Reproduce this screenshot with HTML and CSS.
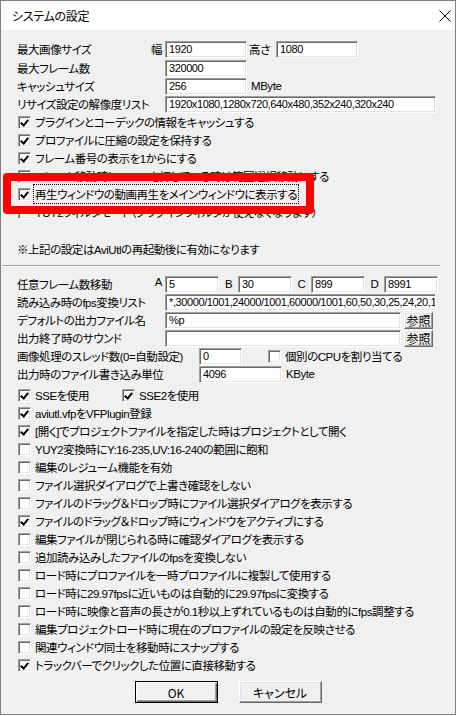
FILE: index.html
```html
<!DOCTYPE html>
<html lang="ja">
<head>
<meta charset="utf-8">
<title>システムの設定</title>
<link rel="stylesheet" href="styles.css">
</head>
<body>
<div class="window">
  <div class="titlebar">
    <span class="title">システムの設定</span>
    <svg class="close" width="12" height="12" viewBox="0 0 12 12"><path d="M0.5 0.5 L11.5 11.5 M11.5 0.5 L0.5 11.5" stroke="#000" stroke-width="1" fill="none"/></svg>
  </div>
  <div class="content">
    <div class="row first">
      <div class="lbl"><span>最大画像サイズ</span><span>幅</span></div>
      <div class="field w82">1920</div>
      <span class="mid takasa">高さ</span>
      <div class="field w82">1080</div>
    </div>
    <div class="row">
      <div class="lbl"><span>最大フレーム数</span></div>
      <div class="field w82">320000</div>
    </div>
    <div class="row">
      <div class="lbl"><span>キャッシュサイズ</span></div>
      <div class="field w82">256</div>
      <span class="unit">MByte</span>
    </div>
    <div class="row">
      <div class="lbl"><span>リサイズ設定の解像度リスト</span></div>
      <div class="field wfull">1920x1080,1280x720,640x480,352x240,320x240</div>
    </div>

    <div class="checks">
      <div class="row chk"><span class="box on"></span><span class="txt">プラグインとコーデックの情報をキャッシュする</span></div>
      <div class="row chk"><span class="box on"></span><span class="txt">プロファイルに圧縮の設定を保持する</span></div>
      <div class="row chk"><span class="box on"></span><span class="txt">フレーム番号の表示を1からにする</span></div>
      <div class="row chk"><span class="box on"></span><span class="txt">フレーム移動時にSHIFTを押している時は範囲選択移動にする</span></div>
      <div class="row chk"><span class="box on"></span><span class="txt focus">再生ウィンドウの動画再生をメインウィンドウに表示する</span></div>
      <div class="row chk"><span class="box"></span><span class="txt">YUY2フィルタモード（プラグインフィルタが使えなくなります）</span></div>
    </div>

    <div class="note">※上記の設定はAviUtlの再起動後に有効になります</div>
    <div class="sep"></div>

    <div class="row">
      <div class="lbl"><span>任意フレーム数移動</span><span>A</span></div>
      <div class="field w54">5</div>
      <span class="abc">B</span>
      <div class="field w54">30</div>
      <span class="abc">C</span>
      <div class="field w54">899</div>
      <span class="abc">D</span>
      <div class="field w54">8991</div>
    </div>
    <div class="row">
      <div class="lbl"><span>読み込み時のfps変換リスト</span></div>
      <div class="field wfull">*,30000/1001,24000/1001,60000/1001,60,50,30,25,24,20,15,12,10,8,6,5,4,3,2,1</div>
    </div>
    <div class="row">
      <div class="lbl"><span>デフォルトの出力ファイル名</span></div>
      <div class="field w236">%p</div>
      <div class="btn ref">参照</div>
    </div>
    <div class="row">
      <div class="lbl"><span>出力終了時のサウンド</span></div>
      <div class="field w236"></div>
      <div class="btn ref">参照</div>
    </div>
    <div class="row">
      <div class="lbl wide"><span>画像処理のスレッド数(0=自動設定)</span></div>
      <div class="field w43">0</div>
      <span class="box cpu"></span><span class="txt">個別のCPUを割り当てる</span>
    </div>
    <div class="row">
      <div class="lbl wide"><span>出力時のファイル書き込み単位</span></div>
      <div class="field w83">4096</div>
      <span class="unit">KByte</span>
    </div>

    <div class="row chk sse">
      <span class="box on"></span><span class="txt sse1">SSEを使用</span>
      <span class="box on"></span><span class="txt">SSE2を使用</span>
    </div>
    <div class="row chk"><span class="box on"></span><span class="txt">aviutl.vfpをVFPlugin登録</span></div>
    <div class="row chk"><span class="box on"></span><span class="txt">[開く]でプロジェクトファイルを指定した時はプロジェクトとして開く</span></div>
    <div class="row chk"><span class="box"></span><span class="txt">YUY2変換時にY:16-235,UV:16-240の範囲に飽和</span></div>
    <div class="row chk"><span class="box"></span><span class="txt">編集のレジューム機能を有効</span></div>
    <div class="row chk"><span class="box"></span><span class="txt">ファイル選択ダイアログで上書き確認をしない</span></div>
    <div class="row chk"><span class="box"></span><span class="txt">ファイルのドラッグ＆ドロップ時にファイル選択ダイアログを表示する</span></div>
    <div class="row chk"><span class="box on"></span><span class="txt">ファイルのドラッグ＆ドロップ時にウィンドウをアクティブにする</span></div>
    <div class="row chk"><span class="box"></span><span class="txt">編集ファイルが閉じられる時に確認ダイアログを表示する</span></div>
    <div class="row chk"><span class="box"></span><span class="txt">追加読み込みしたファイルのfpsを変換しない</span></div>
    <div class="row chk"><span class="box"></span><span class="txt">ロード時にプロファイルを一時プロファイルに複製して使用する</span></div>
    <div class="row chk"><span class="box"></span><span class="txt">ロード時に29.97fpsに近いものは自動的に29.97fpsに変換する</span></div>
    <div class="row chk"><span class="box"></span><span class="txt">ロード時に映像と音声の長さが0.1秒以上ずれているものは自動的にfps調整する</span></div>
    <div class="row chk"><span class="box"></span><span class="txt">編集プロジェクトロード時に現在のプロファイルの設定を反映させる</span></div>
    <div class="row chk"><span class="box"></span><span class="txt">関連ウィンドウ同士を移動時にスナップする</span></div>
    <div class="row chk"><span class="box on"></span><span class="txt">トラックバーでクリックした位置に直接移動する</span></div>

    <div class="buttons">
      <div class="btn big default">OK</div>
      <div class="btn big">キャンセル</div>
    </div>
  </div>
  <div class="highlight"></div>
</div>
</body>
</html>
```
FILE: styles.css
```css
* { box-sizing: border-box; }
html, body { margin: 0; padding: 0; background: #fff; }
body {
  font-family: "Liberation Sans", "Noto Sans CJK JP", sans-serif;
  font-size: 11.5px;
  letter-spacing: -0.45px;
  color: #000;
  font-feature-settings: "palt";
}
.window {
  position: relative;
  width: 456px;
  height: 715px;
  border: 1px solid #7f7f7f;
  background: #f0f0f0;
  overflow: hidden;
}
.titlebar {
  height: 29px;
  background: #fff;
  display: flex;
  align-items: center;
  justify-content: space-between;
  padding: 0 4px 0 11px;
}
.title {
  font-family: "Noto Sans CJK JP", sans-serif;
  font-size: 12px;
  letter-spacing: -0.3px;
  color: #000;
}
.close { display: block; margin-top: 1px; }

.content { padding: 10px 16px 0 16px; }

.row {
  display: flex;
  align-items: center;
  height: 18px;
  white-space: nowrap;
}
.row.first { margin-bottom: 1px; }
.lbl {
  width: 148px;
  flex: none;
  display: flex;
  justify-content: space-between;
  padding-right: 3px;
}
.lbl.wide { width: 182px; }

.field {
  flex: none;
  height: 17px;
  background: #fff;
  border: 1px solid;
  border-color: #a0a0a0 #fff #fff #a0a0a0;
  box-shadow: inset 1px 1px 0 #696969, inset -1px -1px 0 #e3e3e3;
  padding: 0 0 0 3px;
  font-family: "Liberation Sans", sans-serif;
  font-size: 11px;
  letter-spacing: -0.4px;
  line-height: 15px;
  overflow: hidden;
  white-space: nowrap;
}
.w82 { width: 82px; }
.w83 { width: 83px; }
.w54 { width: 54px; }
.w43 { width: 43px; }
.w236 { width: 236px; }
.wfull { width: 271px; }

.takasa { width: 29px; padding-left: 2px; flex: none; }
.unit { margin-left: 4px; }
.abc { width: 19px; flex: none; text-align: center; }

.btn {
  flex: none;
  display: flex;
  align-items: center;
  justify-content: center;
  background: #f0f0f0;
  border: 1px solid;
  border-color: #fff #696969 #696969 #fff;
  box-shadow: inset -1px -1px 0 #a0a0a0, inset 1px 1px 0 #e3e3e3;
  font-family: "Noto Sans CJK JP", sans-serif;
  letter-spacing: 0;
}
.btn.ref {
  width: 29px;
  height: 17px;
  margin-left: 3px;
  font-size: 12px;
}

.chk .txt, .row .txt { margin-left: 4px; }
.box {
  flex: none;
  position: relative;
  width: 13px;
  height: 13px;
  background: #fff;
  border: 1px solid;
  border-color: #a0a0a0 #fff #fff #a0a0a0;
  box-shadow: inset 1px 1px 0 #696969, inset -1px -1px 0 #e3e3e3;
  margin-left: 1px;
}
.box.on::after {
  content: "";
  position: absolute;
  left: 2px;
  top: 1px;
  width: 3px;
  height: 6px;
  border: solid #000;
  border-width: 0 2px 2px 0;
  transform: translate(1px, 0) rotate(40deg);
}
.box.cpu { margin-left: 26px; }
.txt.focus {
  outline: 1px dotted #000;
  outline-offset: 1px;
}
.sse1 { width: 86px; flex: none; }

.note { margin-top: 20px; height: 18px; line-height: 18px; }
.sep {
  margin: 6px 0 0 -15px;
  width: 438px;
  height: 2px;
  border-top: 1px solid #a0a0a0;
  border-bottom: 1px solid #fff;
}
.sep + .row { margin-top: 8px; }
.row.sse { margin-top: 3px; }

.buttons {
  display: flex;
  justify-content: center;
  gap: 21px;
  margin-top: 7px;
}
.btn.big {
  width: 83px;
  height: 22px;
  font-size: 12px;
}
.btn.default {
  border: 1px solid #000;
  box-shadow: inset 1px 1px 0 #fff, inset -1px -1px 0 #696969, inset -2px -2px 0 #a0a0a0;
}

.highlight {
  position: absolute;
  left: 2px;
  top: 172px;
  width: 311px;
  height: 41px;
  border: 8px solid #ff0000;
  border-radius: 4px;
}
```
